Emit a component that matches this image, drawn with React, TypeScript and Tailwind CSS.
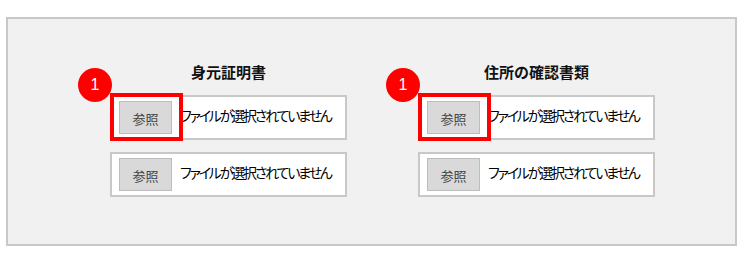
export default function App() {
  const groups = ["身元証明書", "住所の確認書類"];

  return (
    <div className="w-[743px] h-[257px] bg-white pt-[17px] pl-[6px] font-['Noto_Sans_CJK_JP',sans-serif]">
      <div className="w-[731px] h-[229px] bg-[#f1f1f1] border-2 border-[#c8c8c8] flex gap-[71px] pl-[102px] pt-[43px]">
        {groups.map((title) => (
          <div key={title} className="w-[237px] flex flex-col">
            <div className="text-center text-[15px] leading-[20px] font-bold text-[#111] mb-[13px]">
              {title}
            </div>
            <div className="flex flex-col gap-[12px]">
              {[0, 1].map((i) => (
                <div
                  key={i}
                  className="relative h-[45px] bg-white border-2 border-[#c8c8c8] flex items-center pl-[7px]"
                >
                  <div className="shrink-0 w-[53px] h-[33px] bg-[#d9d9d9] border border-[#bdbdbd] flex items-center justify-center pt-[3px] text-[13px] text-[#444]">
                    参照
                  </div>
                  <span className="ml-[8px] -mt-[4px] whitespace-nowrap text-[14px] text-black [font-feature-settings:'palt'] tracking-[-2.2px]">
                    ファイルが選択されていません
                  </span>
                  {i === 0 && (
                    <>
                      <div className="absolute -left-[2px] -top-[4px] w-[73px] h-[48px] border-[4px] border-[#ff0000]" />
                      <div className="absolute -left-[34px] -top-[29px] w-[34px] h-[34px] rounded-full bg-[#ff0000] flex items-center justify-center text-white text-[16px] font-['Liberation_Sans',sans-serif]">
                        1
                      </div>
                    </>
                  )}
                </div>
              ))}
            </div>
          </div>
        ))}
      </div>
    </div>
  );
}
